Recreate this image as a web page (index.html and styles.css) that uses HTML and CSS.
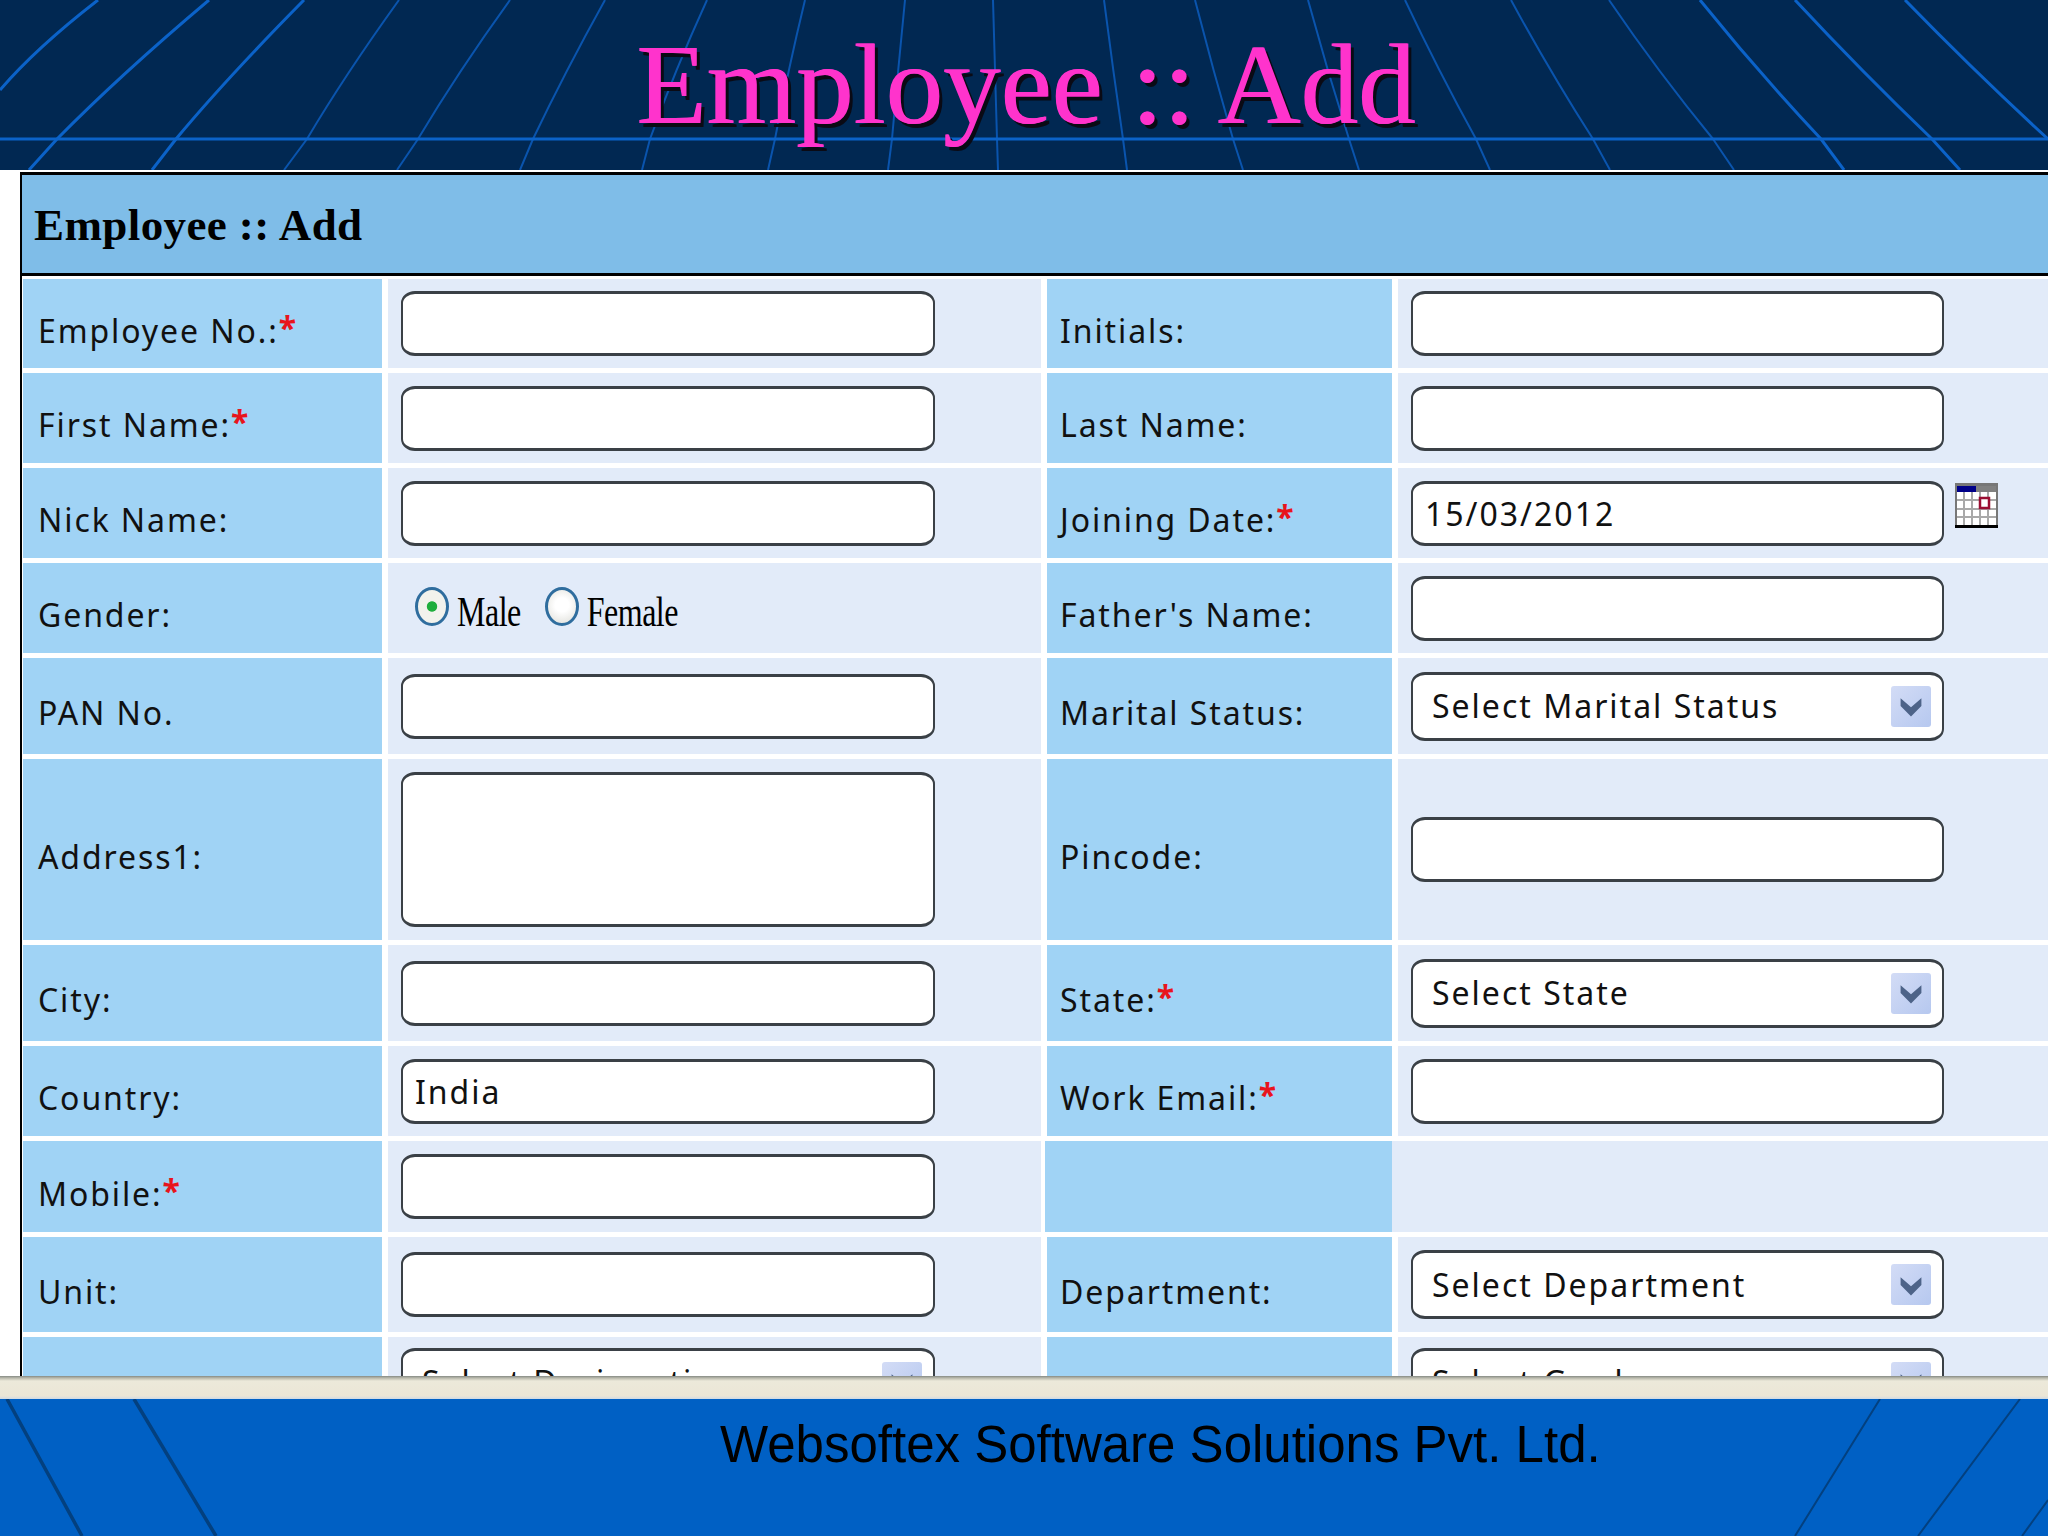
FILE: index.html
```html
<!DOCTYPE html>
<html lang="en">
<head>
<meta charset="utf-8">
<title>Employee :: Add</title>
<link rel="stylesheet" href="styles.css">
</head>
<body>
<div class="slide">
  <header class="banner">
    <svg class="banner-lines" viewBox="0 0 2048 170" preserveAspectRatio="none" aria-hidden="true">
      <g class="thin">
        <path d="M399 0Q345 75 307 139L284 170"/>
        <path d="M510 0Q458 72 418 139L397 170"/>
        <path d="M605 0Q565 72 533 139L520 170"/>
        <path d="M707 0Q675 70 650 139L642 170"/>
        <path d="M805 0Q788 70 775 139L768 170"/>
        <path d="M905 0Q898 70 892 139L888 170"/>
        <path d="M993 0Q995 70 997 139L998 170"/>
        <path d="M1104 0Q1113 70 1123 139L1127 170"/>
        <path d="M1195 0Q1213 70 1233 139L1243 170"/>
        <path d="M1308 0Q1327 70 1349 139L1359 170"/>
        <path d="M1405 0Q1438 70 1476 139L1490 170"/>
        <path d="M1511 0Q1550 72 1593 139L1610 170"/>
        <path d="M1609 0Q1658 72 1713 139L1734 170"/>
      </g>
      <g class="thick">
        <path d="M98 0Q36 48 0 90"/>
        <path d="M209 0Q120 75 57 139L29 170"/>
        <path d="M304 0Q225 80 176 139L152 170"/>
        <path d="M1700 0Q1758 72 1821 139L1844 170"/>
        <path d="M1795 0Q1862 72 1932 139L1960 170"/>
        <path d="M1905 0Q1975 72 2048 139"/>
        <path d="M0 139H2048"/>
      </g>
    </svg>
    <h1 class="slide-title">Employee :: Add</h1>
  </header>

  <main class="window">
    <section class="panel">
      <h2 class="panel-head"><span>Employee :: Add</span></h2>
      <div class="form-grid">
        <div class="lab">Employee No.:<i>*</i></div>
        <div class="val"><div class="field"></div></div>
        <div class="lab alt">Initials:</div>
        <div class="val alt"><div class="field"></div></div>

        <div class="lab">First Name:<i>*</i></div>
        <div class="val"><div class="field"></div></div>
        <div class="lab alt">Last Name:</div>
        <div class="val alt"><div class="field"></div></div>

        <div class="lab">Nick Name:</div>
        <div class="val"><div class="field"></div></div>
        <div class="lab alt">Joining Date:<i>*</i></div>
        <div class="val alt date">
          <div class="field">15/03/2012</div>
          <svg class="calendar" viewBox="0 0 43 45" aria-hidden="true">
            <rect width="43" height="45" fill="#777"/>
            <rect x="2" y="3" width="39" height="39" fill="#fff"/>
            <rect x="2" y="3" width="19" height="6" fill="#000088"/>
            <rect x="21" y="3" width="20" height="6" fill="#808080"/>
            <path d="M9 9v33M17 9v33M25 9v33M33 9v33M2 17h39M2 26h39M2 34h39" stroke="#a9a9a9" stroke-width="2" fill="none"/>
            <rect x="25" y="15" width="9" height="10" fill="#fff" stroke="#9a0f33" stroke-width="2.5"/>
            <rect y="42" width="43" height="3" fill="#000"/>
          </svg>
        </div>

        <div class="lab">Gender:</div>
        <div class="val gender">
          <span class="radio on"></span><span class="radio-text">Male</span>
          <span class="radio"></span><span class="radio-text">Female</span>
        </div>
        <div class="lab alt">Father's Name:</div>
        <div class="val alt"><div class="field"></div></div>

        <div class="lab">PAN No.</div>
        <div class="val"><div class="field"></div></div>
        <div class="lab alt">Marital Status:</div>
        <div class="val alt"><div class="field select">Select Marital Status<span class="arrow"><svg viewBox="0 0 20 18" aria-hidden="true"><path d="M2 3l8 7 8-7v6l-8 8-8-8z"/></svg></span></div></div>

        <div class="lab">Address1:</div>
        <div class="val"><div class="field area"></div></div>
        <div class="lab alt">Pincode:</div>
        <div class="val alt"><div class="field"></div></div>

        <div class="lab">City:</div>
        <div class="val"><div class="field"></div></div>
        <div class="lab alt">State:<i>*</i></div>
        <div class="val alt"><div class="field select">Select State<span class="arrow"><svg viewBox="0 0 20 18" aria-hidden="true"><path d="M2 3l8 7 8-7v6l-8 8-8-8z"/></svg></span></div></div>

        <div class="lab">Country:</div>
        <div class="val"><div class="field">India</div></div>
        <div class="lab alt">Work Email:<i>*</i></div>
        <div class="val alt"><div class="field"></div></div>

        <div class="lab">Mobile:<i>*</i></div>
        <div class="val"><div class="field"></div></div>
        <div class="lab empty"></div>
        <div class="val empty"></div>

        <div class="lab">Unit:</div>
        <div class="val"><div class="field"></div></div>
        <div class="lab alt">Department:</div>
        <div class="val alt"><div class="field select">Select Department<span class="arrow"><svg viewBox="0 0 20 18" aria-hidden="true"><path d="M2 3l8 7 8-7v6l-8 8-8-8z"/></svg></span></div></div>

        <div class="lab"></div>
        <div class="val"><div class="field select">Select Designation<span class="arrow"><svg viewBox="0 0 20 18" aria-hidden="true"><path d="M2 3l8 7 8-7v6l-8 8-8-8z"/></svg></span></div></div>
        <div class="lab alt"></div>
        <div class="val alt"><div class="field select">Select Grade<span class="arrow"><svg viewBox="0 0 20 18" aria-hidden="true"><path d="M2 3l8 7 8-7v6l-8 8-8-8z"/></svg></span></div></div>
      </div>
    </section>
  </main>

  <div class="strip"></div>

  <footer class="footer">
    <svg class="footer-lines" viewBox="0 0 2048 137" preserveAspectRatio="none" aria-hidden="true">
      <path class="heavy" d="M7 0L82 137M134 0L216 137"/>
      <path d="M1880 0L1795 137M2020 0L1918 137M2048 101L2022 137"/>
    </svg>
    <p class="company">Websoftex Software Solutions Pvt. Ltd.</p>
  </footer>
</div>
</body>
</html>
```
FILE: styles.css
```css
* { box-sizing: border-box; }
html, body { margin: 0; padding: 0; background: #fff; }

.slide {
  width: 2048px;
  height: 1536px;
  overflow: hidden;
  display: flex;
  flex-direction: column;
}

/* top banner */
.banner {
  position: relative;
  height: 170px;
  flex: none;
  background: #012852;
  padding-left: 636px;
}
.banner-lines {
  position: absolute;
  inset: 0;
  width: 100%;
  height: 100%;
}
.banner-lines path { fill: none; }
.banner-lines .thin path { stroke: #0a54ad; stroke-width: 2; }
.banner-lines .thick path { stroke: #0b62c8; stroke-width: 3; }
.slide-title {
  position: relative;
  margin: 0;
  font: 400 115px/170px "Liberation Serif", serif;
  color: #ff33cc;
  text-shadow: 1px 0 0 #ff33cc, 4px 4px 0 #0a0a14;
  white-space: nowrap;
}

/* captured browser window */
.window {
  flex: none;
  height: 1206px;
  background: #fff;
  padding: 2px 0 0 20px;
  overflow: hidden;
}
.panel {
  height: 100%;
  border-top: 3px solid #000;
  border-left: 2px solid #000;
  padding-left: 1px;
  overflow: hidden;
}
.panel-head {
  margin: 0 0 3px -1px;
  height: 101px;
  background: #7fbde8;
  border-bottom: 3px solid #000;
  padding-left: 12px;
  display: flex;
  align-items: center;
  font: 700 45px/1 "Liberation Serif", serif;
  letter-spacing: 0.4px;
  color: #000;
}
.panel-head span { position: relative; top: 1px; }

.form-grid {
  display: grid;
  grid-template-columns: 359px 653px 345px 1fr;
  grid-template-rows: 89px 90px 90px 90px 96px 181px 96px 90px 91px 95px 90px;
  gap: 5px 6px;
}
.lab, .val { display: flex; align-items: center; }
.lab {
  background: #a0d3f5;
  padding: 14px 0 0 15px;
  font: 400 32px/1 "Noto Sans", sans-serif;
  letter-spacing: 1.9px;
  color: #111;
  white-space: nowrap;
}
.lab.alt { padding-left: 13px; }
.lab.empty { margin-left: -2px; }
.val.empty { margin-left: -6px; }
.lab i {
  font-style: normal;
  font-weight: 700;
  color: #e8141c;
  position: relative;
  top: -3px;
}
.val { background: #e2ebf9; padding-left: 13px; }

.field {
  position: relative;
  width: 534px;
  height: 65px;
  background: #fff;
  border-style: solid;
  border-color: #3a4046;
  border-width: 3px 2px;
  border-radius: 14px / 12px;
  padding: 2px 0 0 12px;
  display: flex;
  align-items: center;
  font: 400 32px/1 "Noto Sans", sans-serif;
  letter-spacing: 2px;
  color: #111;
  white-space: nowrap;
}
.val.alt .field { width: 533px; }
.field.area { height: 155px; }
.field.select { height: 69px; padding-top: 0; padding-left: 19px; }

.arrow {
  position: absolute;
  right: 11px;
  top: 11px;
  width: 40px;
  height: 41px;
  border-radius: 3px;
  background: linear-gradient(135deg, #d3dcf6, #b6c8ef);
  display: flex;
  align-items: center;
  justify-content: center;
}
.arrow svg { width: 26px; height: 24px; }
.arrow path { fill: #4d6388; }

.date { position: relative; }
.calendar {
  position: absolute;
  left: 557px;
  top: 15px;
  width: 43px;
  height: 45px;
}

.gender { padding-left: 27px; }
.radio {
  flex: none;
  width: 34px;
  height: 39px;
  margin-top: -4px;
  border-radius: 50%;
  border: 3px solid #2f6d9e;
  background: radial-gradient(circle at 50% 45%, #fff 30%, #dcdcd6 100%);
}
.radio.on {
  background: radial-gradient(circle at 50% 50%, #1fae3c 0 22%, #f2f2ec 26% 70%, #dcdcd6 100%);
  margin-right: 8px;
}
.radio:not(.on) { margin-left: 24px; margin-right: 8px; }
.radio-text {
  display: inline-block;
  font: 400 32px/1 "Liberation Serif", serif;
  letter-spacing: -0.5px;
  color: #000;
  transform: scaleY(1.3);
  margin-top: 8px;
}

/* thin status strip below the capture */
.strip {
  flex: none;
  height: 23px;
  background: linear-gradient(#858a84 0, #b9b9ac 2px, #ece9da 5px, #ebe6d6 20px, #cfd9e4 100%);
}

/* footer */
.footer {
  position: relative;
  flex: 1;
  background: #0060c4;
  padding: 17px 0 0 720px;
}
.footer-lines {
  position: absolute;
  inset: 0;
  width: 100%;
  height: 100%;
}
.footer-lines path { fill: none; stroke: #03407f; stroke-width: 2; }
.footer-lines path.heavy { stroke-width: 3.5; }
.company {
  position: relative;
  margin: 0;
  font: 400 51px/1.15 "Liberation Sans", sans-serif;
  color: #000;
  white-space: nowrap;
}
```
